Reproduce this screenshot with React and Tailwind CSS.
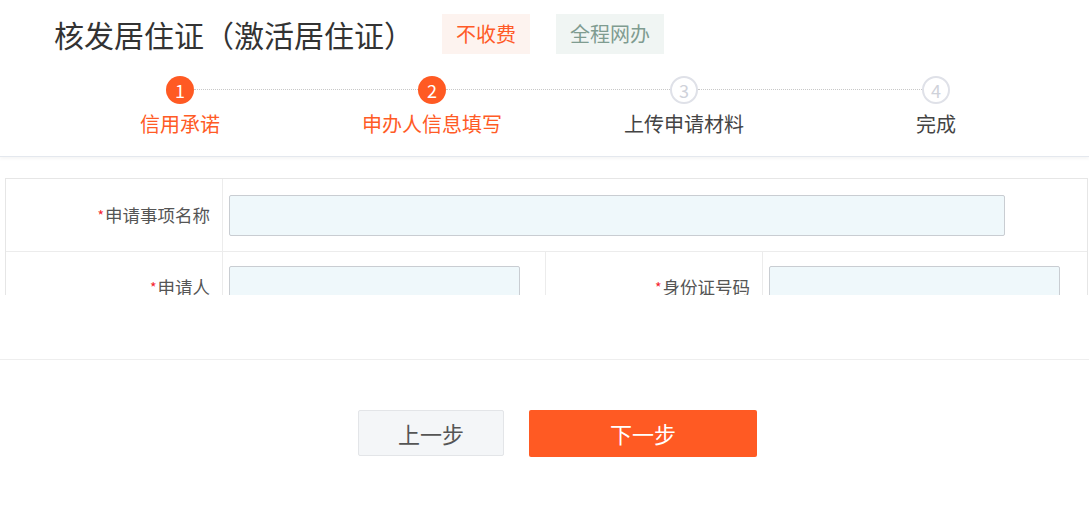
import React from 'react';

const steps = [
  { n: 1, label: '信用承诺', done: true },
  { n: 2, label: '申办人信息填写', done: true },
  { n: 3, label: '上传申请材料', done: false },
  { n: 4, label: '完成', done: false },
];

function Label({ text }) {
  return (
    <div className="w-[217px] shrink-0 flex items-center justify-end pr-[12px] text-[17.5px] text-[#555] border-r border-[#ececec]">
      <span className="text-[#f5222d] text-[14px] mr-[1px]">*</span>
      {text}
    </div>
  );
}

function Input({ className }) {
  return <div className={`h-[41px] bg-[#eff8fb] border border-[#c9cdd2] rounded-[2px] ${className}`} />;
}

export default function App() {
  return (
    <div
      className="w-[1089px] h-[529px] bg-white overflow-hidden"
      style={{ fontFamily: '"Noto Sans CJK SC", "Noto Sans", sans-serif' }}
    >
      {/* header */}
      <div className="h-[157px] border-b border-[#e4e8ee] shadow-[0_2px_3px_rgba(0,0,0,0.04)]">
        <div className="flex items-center pl-[54px] pt-[14px] h-[54px]">
          <h1 className="text-[30px] leading-[40px] text-[#333]">核发居住证（激活居住证）</h1>
          <span className="ml-[28px] h-[40px] px-[14px] flex items-center text-[20px] text-[#ff5a27] bg-[#fdf3ef]">不收费</span>
          <span className="ml-[26px] h-[40px] px-[14px] flex items-center text-[20px] text-[#7f9c90] bg-[#f0f5f3]">全程网办</span>
        </div>

        {/* steps */}
        <div className="grid grid-cols-4 w-[1008px] ml-[54px] mt-[22px]">
          {steps.map((s, i) => (
            <div key={s.n} className="relative flex flex-col items-center">
              {i < steps.length - 1 && (
                <div className="absolute top-[13px] left-[calc(50%+14px)] w-[calc(100%-28px)] border-t border-dotted border-[#c8c8c8]" />
              )}
              {s.done ? (
                <div className="w-[28px] h-[28px] rounded-full bg-[#ff5a23] text-white text-[18px] flex items-center justify-center">
                  {s.n}
                </div>
              ) : (
                <div className="w-[28px] h-[28px] rounded-full border-2 border-[#dfe1e8] text-[#cfd2da] text-[18px] flex items-center justify-center">
                  {s.n}
                </div>
              )}
              <div className={`mt-[6px] text-[20px] leading-[28px] ${s.done ? 'text-[#ff5b26]' : 'text-[#444]'}`}>
                {s.label}
              </div>
            </div>
          ))}
        </div>
      </div>

      {/* form (scroll area) */}
      <div className="h-[138px] overflow-hidden pt-[21px]">
        <div className="ml-[5px] w-[1083px] border border-[#e6e6e6]">
          <div className="flex h-[72px]">
            <Label text="申请事项名称" />
            <div className="flex-1 flex items-center pl-[6px]">
              <Input className="w-[776px]" />
            </div>
          </div>
          <div className="flex h-[72px] border-t border-[#ececec]">
            <Label text="申请人" />
            <div className="w-[323px] shrink-0 pt-[14px] pl-[6px] border-r border-[#ececec]">
              <Input className="w-[291px]" />
            </div>
            <Label text="身份证号码" />
            <div className="flex-1 pt-[14px] pl-[6px]">
              <Input className="w-[291px]" />
            </div>
          </div>
        </div>
      </div>

      <div className="h-[64px]" />

      {/* footer */}
      <div className="border-t border-[#eeeeee] pt-[50px] pl-[358px] flex gap-[25px]">
        <button className="w-[146px] h-[46px] bg-[#f4f6f8] border border-[#e3e5e8] rounded-[2px] text-[22px] text-[#555]">
          上一步
        </button>
        <button className="w-[228px] h-[47px] bg-[#ff5a23] rounded-[2px] text-[22px] text-white">
          下一步
        </button>
      </div>
    </div>
  );
}
